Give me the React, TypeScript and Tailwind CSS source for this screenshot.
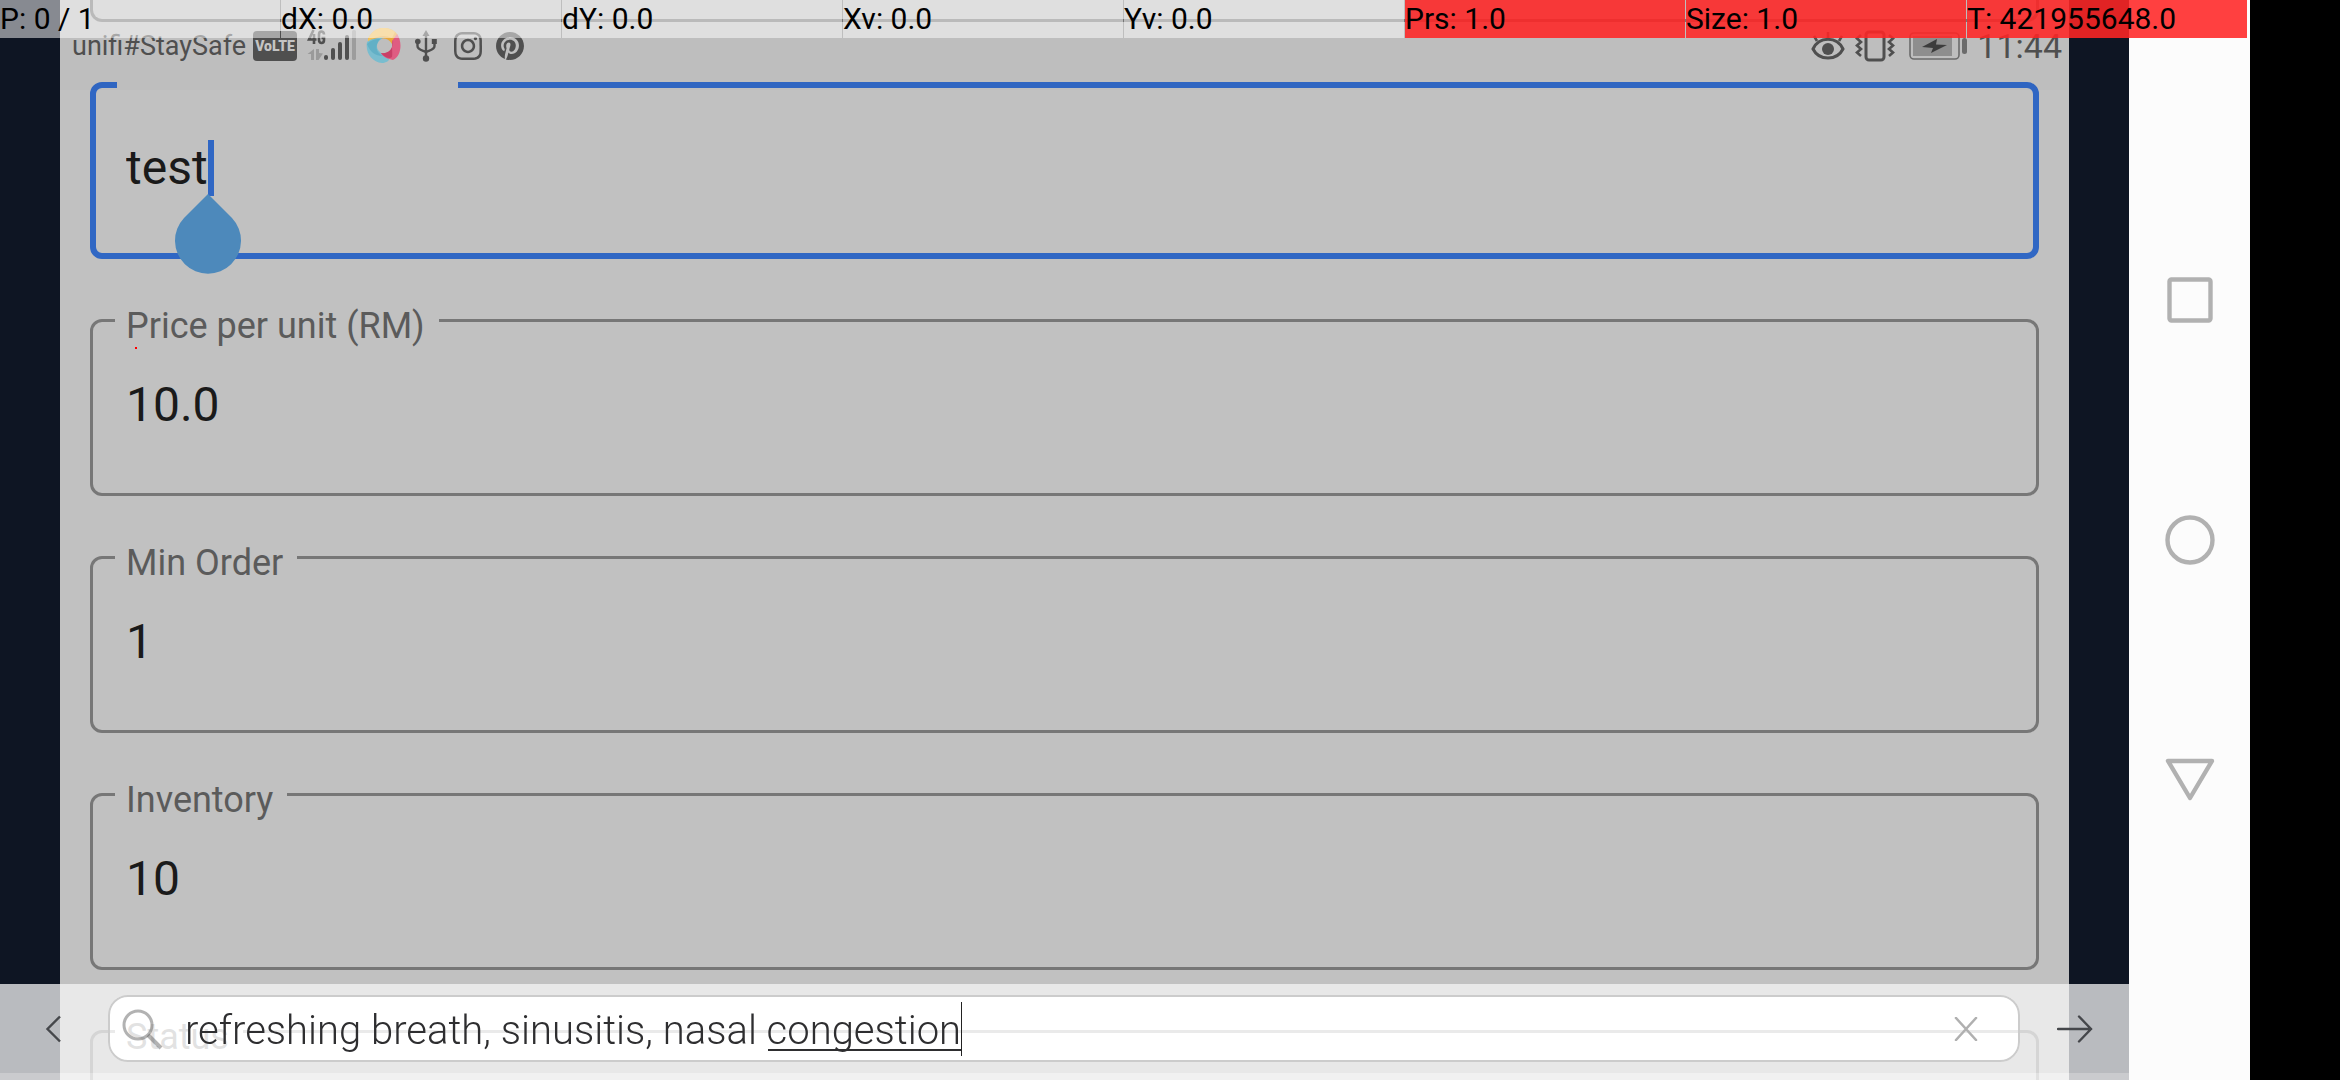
import type { ReactNode } from "react";
import { SiInstagram, SiPinterest } from "react-icons/si";

type Readout = { text: string; alert?: boolean };

const readouts: Readout[] = [
  { text: "P: 0 / 1" },
  { text: "dX: 0.0" },
  { text: "dY: 0.0" },
  { text: "Xv: 0.0" },
  { text: "Yv: 0.0" },
  { text: "Prs: 1.0", alert: true },
  { text: "Size: 1.0", alert: true },
  { text: "T: 421955648.0", alert: true },
];

function PointerReadouts() {
  return (
    <div className="absolute top-0 right-[92px] left-0 z-30 grid h-[37px] grid-cols-8 text-[30px] leading-[38px] text-black">
      {readouts.map((r) => (
        <div key={r.text} className="mr-px bg-white/50">
          <div className={r.alert ? "h-full bg-[#ff0000]/75 whitespace-nowrap" : "h-full whitespace-nowrap"}>
            {r.text}
          </div>
        </div>
      ))}
    </div>
  );
}

function SignalIcon() {
  return (
    <svg width="52" height="34" viewBox="0 0 52 34" fill="#4f4f4f" aria-hidden="true">
      <path d="M6.5 1 L2 10.5 H9.5 M7 5 V15" fill="none" stroke="#4f4f4f" strokeWidth="2.6" />
      <path d="M17 5.5 C17 1.5 12 1.5 12 5.5 V11 C12 15 17 15 17 11 V9 H14.5" fill="none" stroke="#4f4f4f" strokeWidth="2.6" />
      <g fill="#9a9a9a">
        <path d="M7 20 V31 H4 V25 H0.5 Z" />
        <path d="M9 20 H12 V24 L16 24.5 L11.5 31 H9 Z" />
      </g>
      <rect x="17" y="26" width="4" height="5" rx="2" />
      <rect x="24" y="19" width="4" height="12" rx="2" />
      <rect x="31" y="13" width="4" height="18" rx="2" />
      <rect x="38" y="6" width="4" height="25" rx="2" />
      <rect x="45" y="1" width="4" height="30" rx="1.5" fill="#9d9d9d" />
    </svg>
  );
}

function PinwheelIcon() {
  return (
    <svg width="36" height="36" viewBox="0 0 36 36" aria-hidden="true">
      <path d="M2 11 C8 -3 25 -3 32 7 C28 11 27 13 26 16 C22 9 14 9 9 14 Z" fill="#e9a93a" />
      <path d="M2 11 C8 -3 22 -2 29 4 L26 10 C18 6 10 8 2 14 Z" fill="#f0bf58" />
      <path d="M1 14 C5 11 10 10 19 9 C11 12 9 19 13 23 C16 27 20 27 24 28 C24 33 20 35 16 35 C6 34 -1 25 1 14 Z" fill="#79bdcf" />
      <path d="M1 16 C5 12 9 11 14 11 C9 17 9 24 17 28 C9 28 4 24 1 16 Z" fill="#62b0c6" />
      <path d="M31 6 C37 14 35 29 27 32 C22 31 17 29 15 25 C23 27 28 20 26 13 Z" fill="#df5c82" />
      <path d="M27 12 C28 21 22 26 15 25 C19 30 24 31 26 29 C27 23 25 20 27 12 Z" fill="#c93f67" />
    </svg>
  );
}

function UsbIcon() {
  return (
    <svg width="24" height="34" viewBox="0 0 24 34" fill="none" stroke="#4f4f4f" strokeWidth="2.4" aria-hidden="true">
      <path d="M12 6 V28 M3.5 13 V17 C3.5 22 12 21 12 24 M20.5 13 V17 C20.5 22 12 21 12 24" />
      <path d="M12 1 L15.5 7 H8.5 Z" fill="#4f4f4f" stroke="none" />
      <circle cx="3.8" cy="12.5" r="2.8" fill="#4f4f4f" stroke="none" />
      <rect x="17.8" y="10" width="5" height="5" fill="#4f4f4f" stroke="none" />
      <circle cx="12" cy="29.5" r="3.2" fill="#4f4f4f" stroke="none" />
    </svg>
  );
}

function EyeIcon() {
  return (
    <svg width="34" height="32" viewBox="0 0 34 32" fill="none" stroke="#4f4f4f" strokeWidth="3" aria-hidden="true">
      <path d="M2 19 C8 6 26 6 32 19 C26 31 8 31 2 19 Z" />
      <circle cx="17" cy="19" r="6" fill="#4f4f4f" stroke="none" />
      <path d="M17 2 V8 M3 6 L6 11 M31 6 L28 11" strokeWidth="2.6" />
    </svg>
  );
}

function VibrateIcon() {
  return (
    <svg width="40" height="32" viewBox="0 0 40 32" fill="none" stroke="#4f4f4f" strokeWidth="3" aria-hidden="true">
      <rect x="11" y="2" width="18" height="28" rx="3" />
      <path d="M6 5 L2 8.5 L6 12 L2 15.5 L6 19 L2 22.5 L6 26" strokeWidth="2.6" />
      <path d="M34 5 L38 8.5 L34 12 L38 15.5 L34 19 L38 22.5 L34 26" strokeWidth="2.6" />
    </svg>
  );
}

function BatteryIcon() {
  return (
    <svg width="58" height="28" viewBox="0 0 58 28" aria-hidden="true">
      <rect x="1" y="1" width="49" height="26" rx="4" fill="none" stroke="#6b6b6b" strokeWidth="1.6" />
      <rect x="4" y="4" width="39" height="20" fill="#8e8e8e" />
      <path d="M28 7 L13 15 L24 16 L22 21 L38 13 L27 12.5 Z" fill="#3c3c3c" />
      <rect x="53" y="6" width="5" height="16" rx="2.5" fill="#6b6b6b" />
    </svg>
  );
}

function StatusBar() {
  return (
    <div className="absolute inset-x-0 top-0 z-20 flex h-[90px] items-start justify-between bg-black/[0.012] pt-7 pr-[7px] pl-3 text-[#4f4f4f]">
      <div className="flex h-9 items-center">
        <span className="w-[181px] text-[27px] leading-9 whitespace-nowrap">unifi#StaySafe</span>
        <span className="flex h-[30px] w-11 items-center justify-center rounded bg-[#4f4f4f] text-[14px] font-black text-[#c4c4c4]">
          VoLTE
        </span>
        <span className="ml-[10px]"><SignalIcon /></span>
        <span className="ml-[7px]"><PinwheelIcon /></span>
        <span className="ml-3"><UsbIcon /></span>
        <SiInstagram className="ml-4 size-7" aria-hidden="true" />
        <SiPinterest className="ml-[14px] size-7" aria-hidden="true" />
      </div>
      <div className="flex h-9 items-center">
        <EyeIcon />
        <span className="ml-[10px]"><VibrateIcon /></span>
        <span className="ml-[14px]"><BatteryIcon /></span>
        <span className="ml-[10px] text-[34px] leading-9">11:44</span>
      </div>
    </div>
  );
}

function Field({ id, label, value }: { id: string; label: string; value: string }) {
  return (
    <fieldset className="h-[200px] min-w-0 rounded-[12px] border-[3px] border-[#777777] px-[22px]">
      <legend className="h-[49px] pt-[10px] pr-[14px] pl-[11px] text-[36px] leading-[41px] text-[#5b5b5b]">
        <label htmlFor={id}>{label}</label>
      </legend>
      <input
        id={id}
        defaultValue={value}
        className="mt-8 block h-14 w-full bg-transparent px-[11px] text-[48px] leading-[56px] text-[#1a1a1a] outline-none"
      />
    </fieldset>
  );
}

function FocusedField() {
  return (
    <fieldset className="h-[200px] min-w-0 rounded-[12px] border-[6px] border-[#3067c4] px-[21px]">
      <legend className="h-[52px] w-[341px]" />
      <div className="mt-[29px] flex h-14 items-center pl-[9px]">
        <input
          aria-label="Product name"
          defaultValue="test"
          className="field-sizing-content h-14 bg-transparent text-[48px] leading-[56px] text-[#1a1a1a] caret-transparent outline-none"
        />
        <span className="relative h-14 w-[6px] bg-[#3067c4]">
          <svg className="absolute top-[54px] left-[-33px]" width="66" height="80" viewBox="0 0 66 80" aria-hidden="true">
            <path d="M33 0 L57 24 A33 33 0 1 1 9 24 Z" fill="#4d89bb" />
          </svg>
        </span>
      </div>
    </fieldset>
  );
}

function SearchBar() {
  return (
    <div className="absolute inset-x-0 bottom-0 z-20 flex h-24 flex-col">
      <div className="flex h-[89px] items-center bg-[#f6f6f6]/74 pr-9 pl-[45px]">
        <button type="button" aria-label="Back" className="w-[63px]">
          <svg width="16" height="28" viewBox="0 0 16 28" fill="none" stroke="#45474b" strokeWidth="2.4" aria-hidden="true">
            <path d="M15 1.5 L2.5 14 L15 26.5" />
          </svg>
        </button>
        <div className="flex h-[67px] flex-1 items-center rounded-[20px] border-2 border-[#cccccc] pr-10 pl-3 backdrop-brightness-110">
          <svg width="42" height="42" viewBox="0 0 42 42" fill="none" stroke="#555555" strokeOpacity="0.45" strokeWidth="3" aria-hidden="true">
            <circle cx="16" cy="17" r="14" />
            <path d="M26 27 L39 40" strokeWidth="4" />
          </svg>
          <div className="relative ml-[21px] flex h-[54px] items-center border-r border-[#222222] pt-[5px]">
            <input
              aria-label="Search"
              defaultValue="refreshing breath, sinusitis, nasal congestion"
              className="field-sizing-content bg-transparent text-[40px] leading-[48px] font-light text-[#2e2e30] outline-none"
            />
            <span className="absolute right-0 bottom-[5px] h-[2px] w-[193px] bg-[#2e2e30]" />
          </div>
          <button type="button" aria-label="Clear" className="ml-auto">
            <svg width="24" height="24" viewBox="0 0 24 24" fill="none" stroke="#b0b0b0" strokeWidth="2.6" strokeLinecap="round" aria-hidden="true">
              <path d="M2 1 L22 23 M22 1 L2 23" />
            </svg>
          </button>
        </div>
        <button type="button" aria-label="Go" className="ml-[37px]">
          <svg width="36" height="28" viewBox="0 0 36 28" fill="none" stroke="#45474b" strokeWidth="2.4" strokeLinecap="round" aria-hidden="true">
            <path d="M1 14 H34 M22 1.5 L34 14 L22 26.5" />
          </svg>
        </button>
      </div>
      <div className="h-[7px] bg-white/78" />
    </div>
  );
}

function NavButton({ label, children }: { label: string; children: ReactNode }) {
  return (
    <button type="button" aria-label={label} className="flex size-[60px] items-center justify-center">
      <svg width="50" height="50" viewBox="0 0 50 50" fill="none" stroke="#b1b1b1" strokeWidth="4.4" strokeLinejoin="round" aria-hidden="true">
        {children}
      </svg>
    </button>
  );
}

export default function App() {
  return (
    <div className="relative flex h-screen overflow-hidden bg-black font-['Roboto','Noto_Sans',sans-serif]">
      <PointerReadouts />
      <div className="relative flex min-w-0 flex-1 overflow-hidden bg-[#0e1523] px-[60px]">
        <main className="relative h-full min-w-0 flex-1 overflow-hidden bg-[#c1c1c1] px-[30px]">
          <StatusBar />
          <form className="flex flex-col gap-[37px]">
            <div className="h-[22px] rounded-b-[12px] border-x-[3px] border-b-[3px] border-[#777777]" />
            <FocusedField />
            <div className="relative">
              <Field id="price" label="Price per unit (RM)" value="10.0" />
              <span className="absolute top-[51px] left-[45px] size-[2px] bg-[#ff0000]" />
            </div>
            <Field id="min-order" label="Min Order" value="1" />
            <Field id="inventory" label="Inventory" value="10" />
            <Field id="status" label="Status" value="" />
          </form>
        </main>
        <SearchBar />
      </div>
      <nav className="flex w-[121px] flex-col items-center justify-center gap-[180px] bg-[#fcfcfc]">
        <NavButton label="Recent apps">
          <rect x="4.5" y="4.5" width="41" height="41" rx="2" />
        </NavButton>
        <NavButton label="Home">
          <circle cx="25" cy="25" r="22.5" />
        </NavButton>
        <NavButton label="Back">
          <path d="M3 6 H47 L25 43 Z" />
        </NavButton>
      </nav>
      <div className="w-[90px]" />
    </div>
  );
}
